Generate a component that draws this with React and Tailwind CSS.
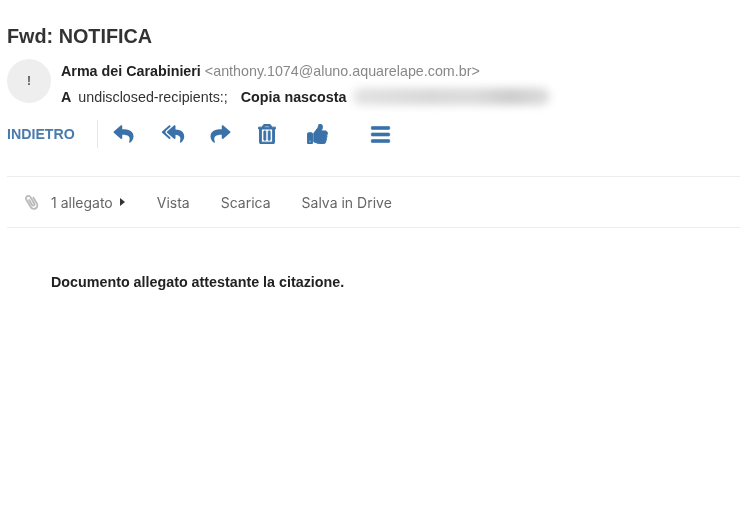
import React from "react";
import { FaReply, FaReplyAll, FaShare, FaRegTrashAlt, FaThumbsUp, FaBars, FaPaperclip } from "react-icons/fa";

export default function App() {
  return (
    <div className="w-[740px] h-[516px] bg-white overflow-hidden font-['Liberation_Sans',Arial,sans-serif] blur-[0.4px]">
      <div className="pl-[7px] pt-[25px]">
        <h1 className="text-[19.8px] leading-[22px] font-bold text-[#333]">Fwd: NOTIFICA</h1>
        <div className="flex mt-[12px] gap-[10px]">
          <div className="w-[44px] h-[44px] rounded-full bg-[#eeeeee] flex items-center justify-center text-[12px] font-bold text-[#555]">!</div>
          <div className="pt-[4px]">
            <div className="text-[14.3px] leading-[16px] text-[#888]">
              <span className="font-bold text-[#222]">Arma dei Carabinieri</span> <span>&lt;anthony.1074@aluno.aquarelape.com.br&gt;</span>
            </div>
            <div className="flex items-center mt-[9px] text-[14.3px] leading-[16px] text-[#222]">
              <span className="font-bold">A</span>
              <span className="ml-[7px] text-[#333]">undisclosed-recipients:;</span>
              <span className="ml-[13px] font-bold">Copia nascosta</span>
              <span className="ml-[7px] w-[197px] h-[17px] rounded-full bg-[linear-gradient(90deg,#e2e2e2,#d8d8d8_40%,#dcdcdc_60%,#cccccc_80%,#dddddd)] blur-[4px]"></span>
            </div>
          </div>
        </div>
        <div className="flex items-center mt-[14px] h-[30px] text-[#3a71a8]">
          <span className="w-[91px] text-[14.2px] font-bold text-[#4a7bad] border-r border-[#e6e6e6] leading-[28px]">INDIETRO</span>
          <div className="flex items-center">
            <FaReply className="ml-[14px] w-[23px] h-[20px]" />
            <FaReplyAll className="ml-[26px] w-[24px] h-[20px]" />
            <FaShare className="ml-[24px] w-[23px] h-[20px]" />
            <FaRegTrashAlt className="ml-[26px] w-[18px] h-[20px] stroke-[24]" />
            <FaThumbsUp className="ml-[31px] w-[21px] h-[20px] stroke-[24]" />
            <FaBars className="ml-[42px] w-[21px] h-[21px] stroke-[16]" />
          </div>
        </div>
      </div>
      <div className="ml-[7px] mt-[27px] h-[52px] border-y border-[#ededed] flex items-center text-[14px] text-[#666] font-['Inter','Liberation_Sans',sans-serif]">
        <FaPaperclip className="ml-[17px] w-[15px] h-[15px] text-[#bbb] rotate-[-75deg]" />
        <span className="ml-[12px]">1 allegato</span>
        <span className="ml-[7px] w-0 h-0 border-y-[4px] border-y-transparent border-l-[5px] border-l-[#333]"></span>
        <span className="ml-[32px]">Vista</span>
        <span className="ml-[31px]">Scarica</span>
        <span className="ml-[31px]">Salva in Drive</span>
      </div>
      <p className="ml-[51px] mt-[46px] text-[14.3px] leading-[16px] font-bold text-[#222]">Documento allegato attestante la citazione.</p>
    </div>
  );
}
